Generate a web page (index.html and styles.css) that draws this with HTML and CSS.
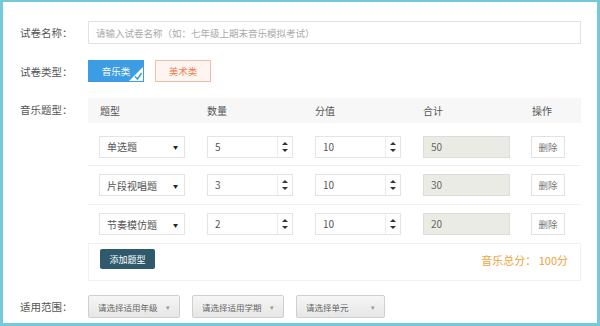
FILE: index.html
```html
<!DOCTYPE html>
<html lang="zh-CN">

<head>
  <meta charset="UTF-8">
  <title>试卷设置</title>
  <link rel="stylesheet" href="styles.css">
</head>

<body>
  <div class="frame">
    <!-- 试卷名称 -->
    <div class="form-row">
      <label class="form-label">试卷名称：</label>
      <input class="text-input" type="text" placeholder="请输入试卷名称（如：七年级上期末音乐模拟考试）">
    </div>

    <!-- 试卷类型 -->
    <div class="form-row type-row">
      <label class="form-label">试卷类型：</label>
      <button class="type-btn active">音乐类
        <svg class="corner" width="14" height="14" viewBox="0 0 14 14">
          <polygon points="14,0 14,14 0,14" fill="#fff"/>
          <polyline points="6,9.5 8.5,12 12.5,6" fill="none" stroke="#3d9de3" stroke-width="1.6"/>
        </svg>
      </button>
      <button class="type-btn art">美术类</button>
    </div>

    <!-- 音乐题型 -->
    <div class="form-row table-row">
      <label class="form-label">音乐题型：</label>
      <div class="q-table">
        <div class="q-head">
          <span class="c-type">题型</span>
          <span class="c-num">数量</span>
          <span class="c-score">分值</span>
          <span class="c-sum">合计</span>
          <span class="c-op">操作</span>
        </div>
        <div id="rows"></div>
        <div class="q-foot">
          <button class="add-btn">添加题型</button>
          <span class="total">音乐总分： 100分</span>
        </div>
      </div>
    </div>

    <!-- 适用范围 -->
    <div class="form-row scope-row">
      <label class="form-label">适用范围：</label>
      <div class="scope-select w1">请选择适用年级<span class="caret">▾</span></div>
      <div class="scope-select w2">请选择适用学期<span class="caret">▾</span></div>
      <div class="scope-select w3">请选择单元<span class="caret">▾</span></div>
    </div>
  </div>

  <script>
    const questions = [
      { type: '单选题', num: 5, score: 10 },
      { type: '片段视唱题', num: 3, score: 10 },
      { type: '节奏模仿题', num: 2, score: 10 }
    ];

    function spinner() {
      return `<span class="spin"><i class="up"></i><i class="down"></i></span>`;
    }

    function renderRows() {
      const box = document.getElementById('rows');
      box.innerHTML = '';
      questions.forEach(q => {
        box.innerHTML += `
          <div class="q-row">
            <div class="c-type"><div class="sel">${q.type}<span class="tri">▼</span></div></div>
            <div class="c-num"><div class="num">${q.num}${spinner()}</div></div>
            <div class="c-score"><div class="num">${q.score}${spinner()}</div></div>
            <div class="c-sum"><div class="sum">${q.num * q.score}</div></div>
            <div class="c-op"><button class="del-btn">删除</button></div>
          </div>
        `;
      });
    }

    renderRows();
  </script>
</body>

</html>
```

FILE: styles.css
```css
body {
  margin: 0;
  padding: 0;
  background-color: #ffffff;
  font-family: "Noto Sans CJK SC", "Noto Sans", sans-serif;
  font-size: 10px;
  color: #555;
}

button {
  font-family: inherit;
}

.frame {
  width: 600px;
  height: 326px;
  box-sizing: border-box;
  border: 3px solid #74cadd;
  border-top-width: 2px;
  padding: 19px 16px 0 17px;
}

/* Rows */
.form-row {
  display: flex;
  align-items: center;
  margin-bottom: 16px;
}

.form-label {
  width: 68px;
  flex-shrink: 0;
  font-size: 10.5px;
  color: #555;
}

.text-input {
  width: 493px;
  height: 23px;
  box-sizing: border-box;
  border: 1px solid #e2e2e2;
  padding: 0 7px;
  font-family: inherit;
  font-size: 9.5px;
  color: #555;
  outline: none;
}

.text-input::placeholder {
  color: #aaa;
}

/* Type buttons */
.type-btn {
  position: relative;
  width: 56px;
  height: 22px;
  margin-right: 11px;
  border: 1px solid #3d9de3;
  background-color: #3d9de3;
  color: #fff;
  font-size: 9.5px;
  padding: 0;
  cursor: pointer;
}

.type-btn .corner {
  position: absolute;
  right: 0;
  bottom: 0;
  display: block;
}

.type-btn.art {
  background-color: #fff5f0;
  border-color: #f2bca6;
  color: #ef7c52;
}

/* Question table */
.table-row {
  align-items: flex-start;
  margin-bottom: 14px;
}

.table-row .form-label {
  padding-top: 4px;
}

.q-table {
  width: 493px;
}

.q-head,
.q-row {
  display: flex;
  align-items: center;
}

.q-head {
  height: 25px;
  background-color: #f7f7f7;
  font-size: 10px;
  color: #555;
}

.q-row {
  height: 38px;
  border-bottom: 1px solid #efefef;
}

.q-row:first-child {
  height: 43px;
  padding-top: 5px;
  box-sizing: border-box;
}

.c-type { width: 108px; padding-left: 11px; }
.c-num { width: 108px; }
.c-score { width: 108px; }
.c-sum { width: 107px; }
.c-op { flex: 1; }

.q-head .c-op { padding-left: 2px; }
.q-head .c-type { padding-left: 12px; width: 107px; }

.sel {
  width: 86px;
  height: 22px;
  box-sizing: border-box;
  border: 1px solid #e4e4e4;
  display: flex;
  align-items: center;
  justify-content: space-between;
  padding: 0 6px 0 7px;
  color: #555;
}

.tri {
  font-size: 5px;
  color: #222;
}

.num {
  position: relative;
  width: 86px;
  height: 22px;
  box-sizing: border-box;
  border: 1px solid #e4e4e4;
  padding-left: 7px;
  line-height: 20px;
  color: #555;
}

.spin {
  position: absolute;
  right: 0;
  top: 0;
  width: 14px;
  height: 20px;
  border-left: 1px solid #ececec;
}

.spin i {
  position: absolute;
  left: 4px;
  width: 0;
  height: 0;
  border-left: 3px solid transparent;
  border-right: 3px solid transparent;
}

.spin .up {
  top: 5px;
  border-bottom: 3px solid #333;
}

.spin .down {
  top: 12px;
  border-top: 3px solid #333;
}

.sum {
  width: 87px;
  height: 22px;
  box-sizing: border-box;
  border: 1px solid #dedcd6;
  background-color: #ebebe6;
  padding-left: 7px;
  line-height: 20px;
  color: #666;
}

.del-btn {
  width: 34px;
  height: 22px;
  margin-left: 1px;
  border: 1px solid #e2e2e2;
  background-color: #fff;
  color: #777;
  font-size: 9.5px;
  padding: 0;
}

.q-foot {
  display: flex;
  justify-content: space-between;
  align-items: center;
  height: 36px;
  padding: 0 12px 0 11px;
  border: 1px solid #f1f1f1;
  border-top: none;
}

.add-btn {
  width: 55px;
  height: 20px;
  margin-top: -6px;
  border: none;
  border-radius: 2px;
  background-color: #2e5a6c;
  color: #fff;
  font-size: 9px;
  padding: 0;
}

.total {
  color: #f0a23a;
  font-size: 11px;
  margin-top: -4px;
}

/* Scope selects */
.scope-row {
  margin-bottom: 0;
}

.scope-select {
  height: 23px;
  box-sizing: border-box;
  margin-right: 12px;
  border: 1px solid #cfcfcf;
  border-radius: 2px;
  background: linear-gradient(#f6f6f6, #e6e6e6);
  display: flex;
  align-items: center;
  justify-content: space-between;
  padding: 0 9px 0 9px;
  font-size: 8.5px;
  color: #666;
}

.scope-select.w1 { width: 92px; }
.scope-select.w2 { width: 92px; }
.scope-select.w3 { width: 89px; }

.caret {
  font-size: 7px;
  color: #999;
}
```
